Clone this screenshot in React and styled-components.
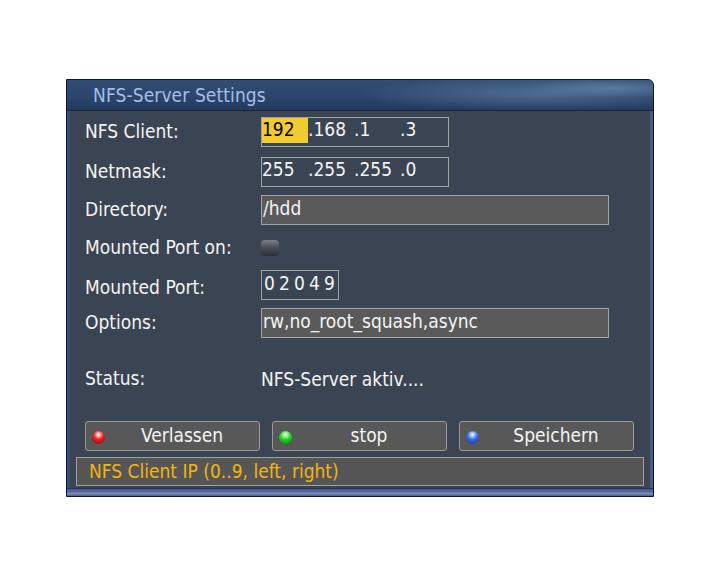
import React from 'react';
import styled, { createGlobalStyle } from 'styled-components';

const GlobalStyle = createGlobalStyle`
  html, body {
    margin: 0;
    padding: 0;
    background: #ffffff;
  }
  body {
    font-family: "DejaVu Sans Condensed", "DejaVu Sans", sans-serif;
  }
`;

// Style
const Page = styled.div`
  width: 720px;
  height: 576px;
  padding: 79px 0 0 66px;
  box-sizing: border-box;
`;

const Window = styled.div`
  width: 588px;
  height: 418px;
  box-sizing: border-box;
  border: 1px solid #0b1631;
  border-top-right-radius: 6px;
  display: flex;
  flex-direction: column;
  background: linear-gradient(90deg, #3d4d78 0%, #4a5b86 100%);
  overflow: hidden;
`;

const TitleBar = styled.div`
  height: 30px;
  flex: none;
  display: flex;
  align-items: center;
  padding-left: 26px;
  border-bottom: 1px solid #16243e;
  background:
    radial-gradient(ellipse 180px 18px at 470px 14px, rgba(120, 150, 190, 0.45), transparent),
    radial-gradient(ellipse 90px 10px at 545px 8px, rgba(140, 170, 205, 0.4), transparent),
    linear-gradient(180deg, #314e77 0%, #2b466c 55%, #223a5c 100%);
`;

const Title = styled.span`
  font-size: 19px;
  color: #a4bee6;
  letter-spacing: 0.1px;
`;

const Body = styled.div`
  flex: 1;
  margin: 0 3px;
  background: #3a4453;
  padding: 6px 0 0 15px;
  display: flex;
  flex-direction: column;
  color: #f4f4f4;
  font-size: 19px;
`;

const Row = styled.div`
  display: flex;
  align-items: center;
  height: 30px;
  margin-bottom: ${p => p.$gap || 8}px;
`;

const Label = styled.div`
  width: 176px;
  flex: none;
  padding-bottom: ${p => (p.$low ? 0 : 3)}px;
  padding-top: ${p => (p.$low ? 4 : 0)}px;
`;

const Field = styled.div`
  box-sizing: border-box;
  height: 30px;
  width: ${p => p.$w}px;
  border: 1px solid #a3a3a3;
  background: ${p => (p.$filled ? '#5a5a5a' : 'transparent')};
  display: flex;
  align-items: center;
  line-height: 1;
  padding-bottom: 3px;
`;

const Segment = styled.div`
  width: ${p => (p.$last ? 47 : 46)}px;
  height: 100%;
  display: flex;
  align-items: center;
  padding-bottom: 2px;
  box-sizing: border-box;
  background: ${p => (p.$active ? '#f2cb2c' : 'transparent')};
  color: ${p => (p.$active ? '#000000' : '#f4f4f4')};
`;

const TextValue = styled.span`
  padding-left: 1px;
`;

const Digit = styled.span`
  width: 15px;
  text-align: center;
`;

const Toggle = styled.div`
  width: 18px;
  height: 16px;
  border-radius: 4px;
  background: linear-gradient(180deg, #7a7f8c 0%, #4b4f5a 45%, #2b2e36 100%);
`;

const ButtonRow = styled.div`
  display: flex;
  gap: 12px;
  margin-top: auto;
  margin-bottom: 6px;
`;

const Button = styled.div`
  width: 175px;
  height: 30px;
  box-sizing: border-box;
  border: 1px solid #9a9a9a;
  border-radius: 3px;
  background: #585858;
  display: flex;
  align-items: center;
  padding-left: 6px;
`;

const Dot = styled.span`
  width: 13px;
  height: 13px;
  margin-top: 2px;
  border-radius: 50%;
  flex: none;
  background: radial-gradient(circle at 50% 28%, #ffffff 0%, ${p => p.$c} 42%, ${p => p.$dark} 100%);
`;

const ButtonLabel = styled.span`
  flex: 1;
  text-align: center;
  padding-bottom: 2px;
`;

const HelpBar = styled.div`
  margin: 0 6px 2px -9px;
  height: 29px;
  box-sizing: border-box;
  border: 1px solid #a0a0a0;
  background: #565656;
  color: #f3b50e;
  display: flex;
  align-items: center;
  padding: 0 0 2px 12px;
`;

const BottomFrame = styled.div`
  height: 7px;
  flex: none;
  border-top: 1px solid #2a3550;
  background: linear-gradient(180deg, #4a5b88 0%, #56689a 40%, #7e90bc 60%, #4d5e8a 100%);
`;

const App = () => {
  const client = ['192', '.168', '.1', '.3'];
  const mask = ['255', '.255', '.255', '.0'];
  const port = ['0', '2', '0', '4', '9'];

  return (
    <Page>
      <GlobalStyle />
      <Window>
        <TitleBar>
          <Title>NFS-Server Settings</Title>
        </TitleBar>
        <Body>
          <Row $gap={10}>
            <Label>NFS Client:</Label>
            <Field $w={188}>
              {client.map((s, i) => (
                <Segment key={i} $active={i === 0} $last={i === 3}>{s}</Segment>
              ))}
            </Field>
          </Row>
          <Row>
            <Label>Netmask:</Label>
            <Field $w={188}>
              {mask.map((s, i) => (
                <Segment key={i} $last={i === 3}>{s}</Segment>
              ))}
            </Field>
          </Row>
          <Row>
            <Label>Directory:</Label>
            <Field $w={348} $filled>
              <TextValue>/hdd</TextValue>
            </Field>
          </Row>
          <Row $gap={7}>
            <Label>Mounted Port on:</Label>
            <Toggle />
          </Row>
          <Row>
            <Label $low>Mounted Port:</Label>
            <Field $w={78}>
              {port.map((d, i) => (
                <Digit key={i}>{d}</Digit>
              ))}
            </Field>
          </Row>
          <Row $gap={26}>
            <Label>Options:</Label>
            <Field $w={348} $filled>
              <TextValue>rw,no_root_squash,async</TextValue>
            </Field>
          </Row>
          <Row>
            <Label>Status:</Label>
            <span>NFS-Server aktiv....</span>
          </Row>
          <ButtonRow>
            <Button>
              <Dot $c="#ee2020" $dark="#8a0000" />
              <ButtonLabel>Verlassen</ButtonLabel>
            </Button>
            <Button>
              <Dot $c="#22dd22" $dark="#007a00" />
              <ButtonLabel>stop</ButtonLabel>
            </Button>
            <Button>
              <Dot $c="#3a6ee8" $dark="#122f90" />
              <ButtonLabel>Speichern</ButtonLabel>
            </Button>
          </ButtonRow>
          <HelpBar>NFS Client IP (0..9, left, right)</HelpBar>
        </Body>
        <BottomFrame />
      </Window>
    </Page>
  );
};

export default App;
